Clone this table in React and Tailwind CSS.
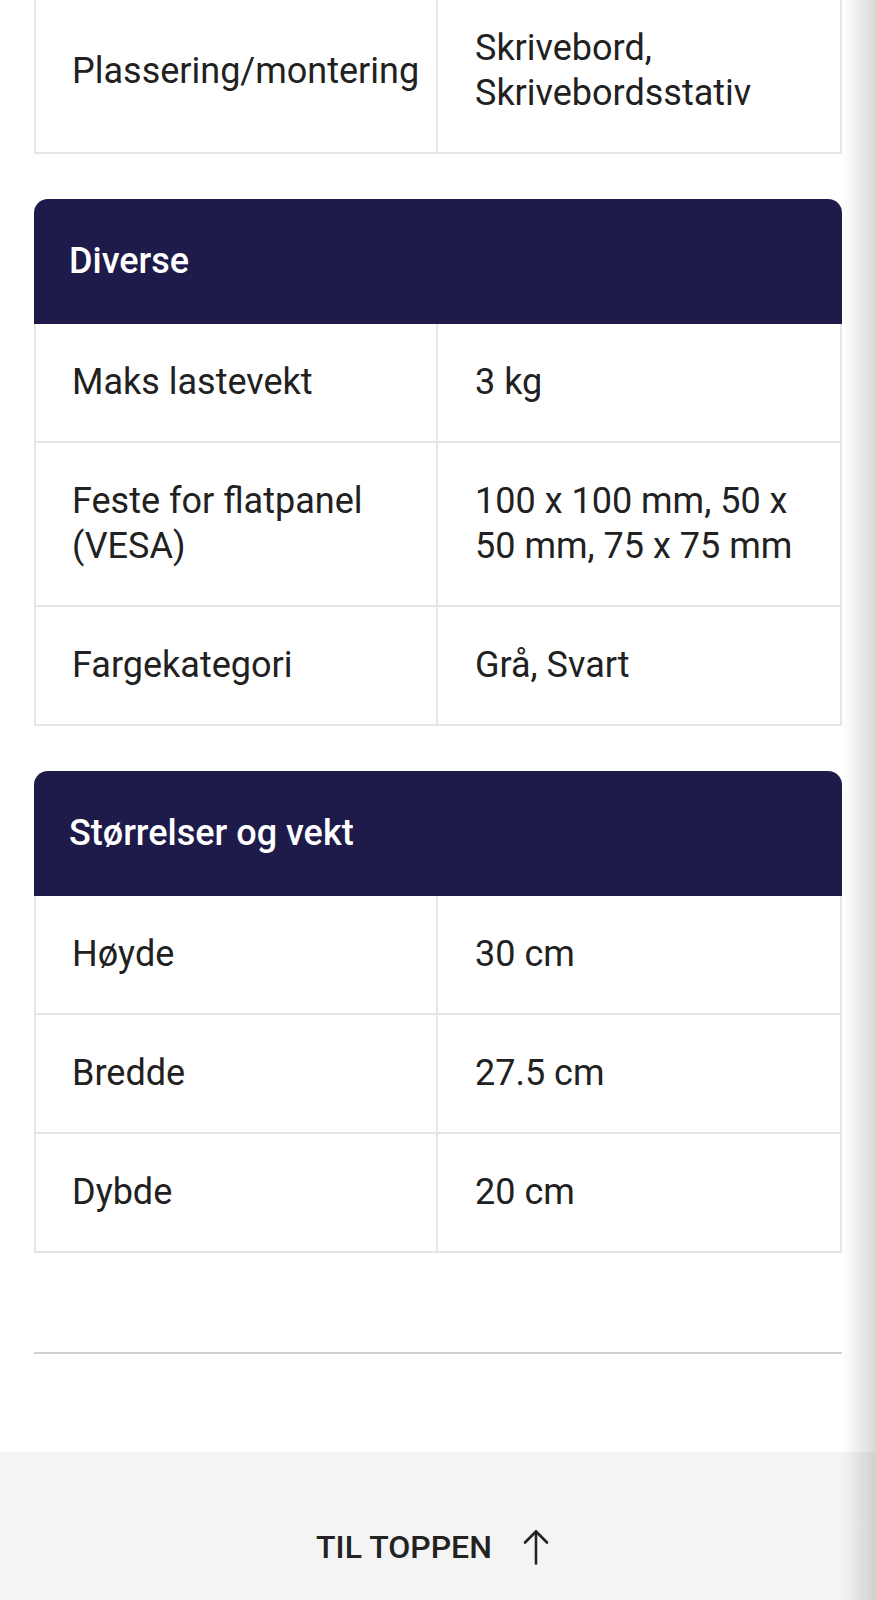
const diverse = [
  { label: "Maks lastevekt", value: "3 kg" },
  { label: "Feste for flatpanel (VESA)", value: "100 x 100 mm, 50 x 50 mm, 75 x 75 mm" },
  { label: "Fargekategori", value: "Grå, Svart" },
];

const sizes = [
  { label: "Høyde", value: "30 cm" },
  { label: "Bredde", value: "27.5 cm" },
  { label: "Dybde", value: "20 cm" },
];

/* ── One spec row: label | value ── */
function SpecRow({ label, value }) {
  return (
    <div className="grid grid-cols-2 border-x-2 border-b-2 border-[#e5e5e5]">
      <div className="flex items-center border-r-2 border-[#e5e5e5] pl-[36px] pr-[14px] py-[36px]">
        {label}
      </div>
      <div className="flex items-center pl-[37px] pr-[18px] py-[36px]">{value}</div>
    </div>
  );
}

function SpecTable({ title, rows }) {
  return (
    <section>
      <h2 className="rounded-t-[14px] bg-[#1e1b4b] px-[35px] py-[40px] text-[36px] font-medium leading-[45px] text-white">
        {title}
      </h2>
      {rows.map((r) => (
        <SpecRow key={r.label} {...r} />
      ))}
    </section>
  );
}

function ArrowUp() {
  return (
    <span className="flex h-[48px] w-[48px] items-center justify-center">
      <svg width="26" height="36" viewBox="0 0 26 36" fill="none" stroke="#222" strokeWidth="2.6" strokeLinecap="round" strokeLinejoin="round">
        <path d="M13 2.5V34.5" />
        <path d="M2 13.5L13 2.5L24 13.5" />
      </svg>
    </span>
  );
}

export default function App() {
  return (
    <div className="relative h-[1600px] overflow-hidden bg-white font-['Roboto',sans-serif] text-[36px] leading-[45px] text-[#212121]">
      <div className="px-[34px]">
        {/* tail of the previous table */}
        <div className="-mt-[10px]">
          <SpecRow label="Plassering/montering" value="Skrivebord, Skrivebordsstativ" />
        </div>

        <div className="mt-[45px]">
          <SpecTable title="Diverse" rows={diverse} />
        </div>

        <div className="mt-[45px]">
          <SpecTable title="Størrelser og vekt" rows={sizes} />
        </div>

        <hr className="mt-[99px] border-0 border-t-2 border-[#d2d2d2]" />
      </div>

      <footer className="mt-[98px] flex items-center justify-center gap-[20px] bg-[#f4f4f4] py-[71px]">
        <span className="text-[32px] font-medium leading-[48px] text-[#222]">TIL TOPPEN</span>
        <ArrowUp />
      </footer>

      {/* right edge shade */}
      <div className="pointer-events-none absolute inset-y-0 right-0 w-[34px] bg-linear-to-r from-transparent to-black/15" />
    </div>
  );
}
